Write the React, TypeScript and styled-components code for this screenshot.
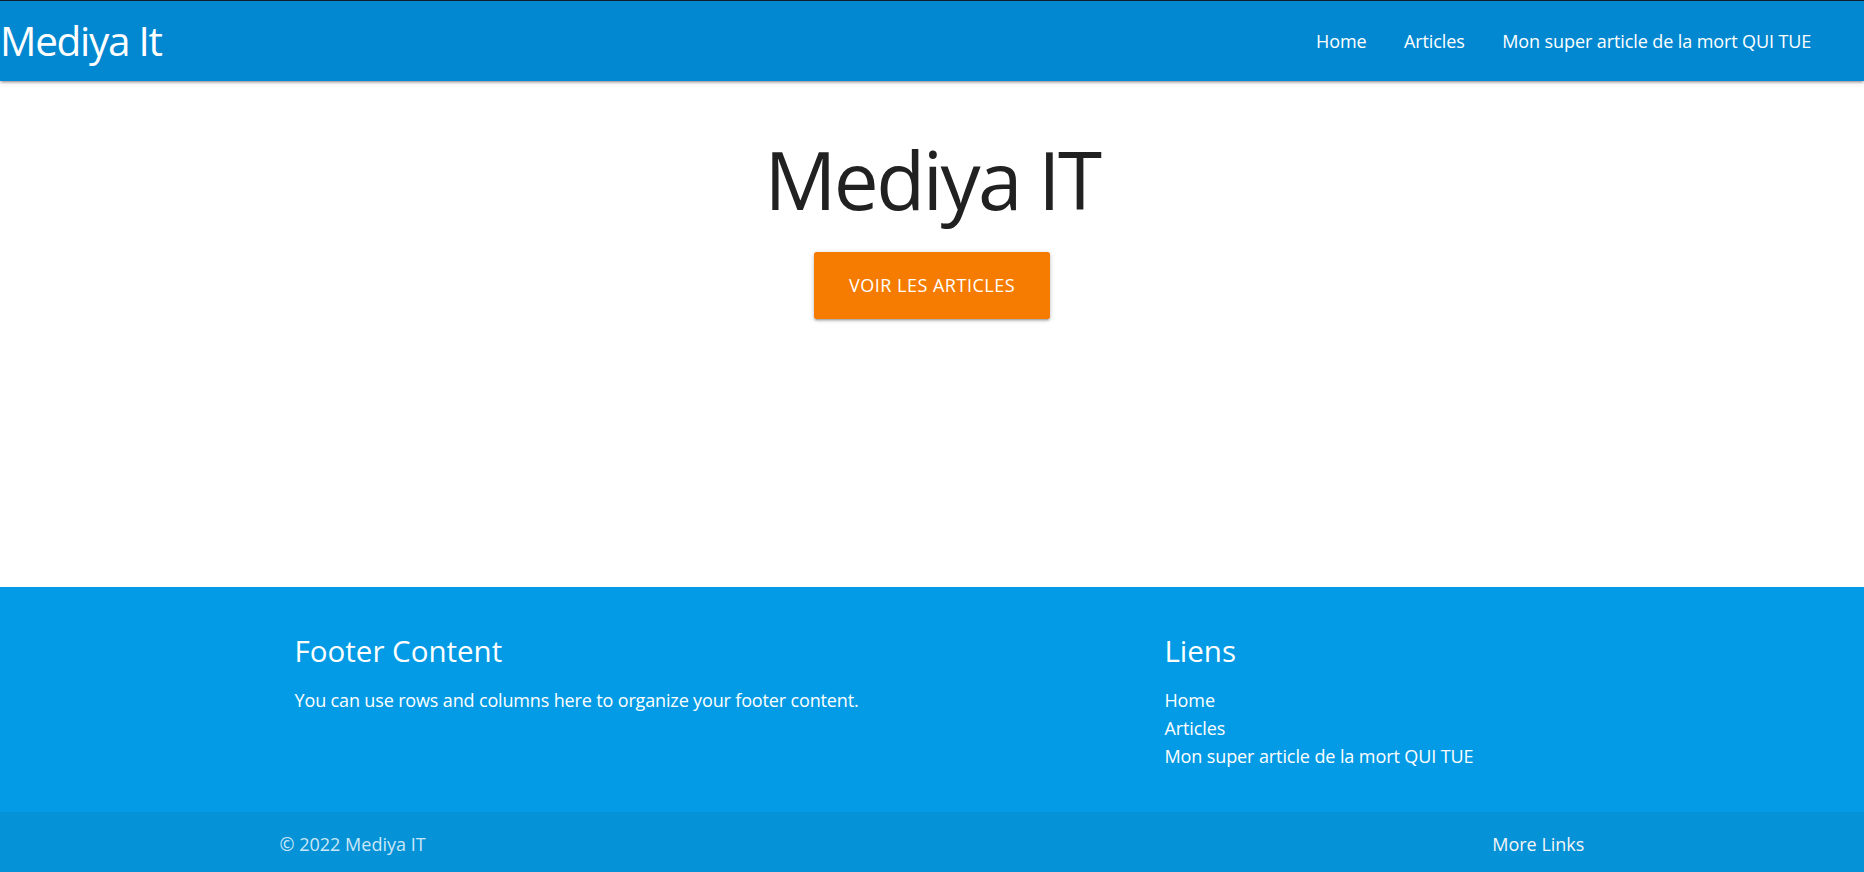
import React from "react";
import styled, { createGlobalStyle } from "styled-components";

const GlobalStyle = createGlobalStyle`
  html, body { margin: 0; padding: 0; }
  body {
    font-family: "Open Sans", "Noto Sans", sans-serif;
    color: rgba(0, 0, 0, 0.87);
    background: #ffffff;
  }
  * { box-sizing: border-box; }
`;

const Page = styled.div`
  display: flex;
  flex-direction: column;
  min-height: 100vh;
`;

const NavBar = styled.nav`
  height: 81px;
  border-top: 1px solid #111d28;
  background: #0288d1;
  color: #ffffff;
  display: flex;
  align-items: center;
  justify-content: space-between;
  box-shadow: 0 2px 2px 0 rgba(0, 0, 0, 0.14), 0 3px 1px -2px rgba(0, 0, 0, 0.12),
    0 1px 5px 0 rgba(0, 0, 0, 0.2);
  position: relative;
  z-index: 2;
`;

const Brand = styled.a`
  font-size: 40.5px;
  letter-spacing: -1.3px;
  line-height: 80px;
  color: #ffffff;
  text-decoration: none;
  padding-left: 0;
`;

const NavList = styled.ul`
  list-style: none;
  display: flex;
  margin: 0;
  padding: 0 34px 0 0;
`;

const NavLink = styled.a`
  display: block;
  padding: 0 18.75px;
  line-height: 80px;
  font-size: 18px;
  letter-spacing: -0.1px;
  color: #ffffff;
  text-decoration: none;
`;

const Main = styled.main`
  flex: 1;
  display: flex;
  flex-direction: column;
  align-items: center;
`;

const Title = styled.h1`
  margin: 52px 0 27px;
  font-size: 80px;
  letter-spacing: -2.5px;
  line-height: 92px;
  font-weight: 400;
  color: #212121;
`;

const ActionButton = styled.a`
  display: inline-block;
  height: 67px;
  line-height: 67px;
  padding: 0 35px;
  font-size: 18px;
  letter-spacing: 0.5px;
  text-transform: uppercase;
  color: #ffffff;
  background: #f57c00;
  border-radius: 2.5px;
  text-decoration: none;
  box-shadow: 0 2px 2px 0 rgba(0, 0, 0, 0.14), 0 3px 1px -2px rgba(0, 0, 0, 0.12),
    0 1px 5px 0 rgba(0, 0, 0, 0.2);
`;

const Footer = styled.footer`
  background: #039be5;
  color: #ffffff;
`;

const FooterBody = styled.div`
  padding: 46px 0 42px;
`;

const Container = styled.div`
  width: 70%;
  margin: 0 auto;
`;

const FooterRow = styled.div`
  display: grid;
  grid-template-columns: 3fr 1fr 2fr;
`;

const FooterCol = styled.div<{ $col: number }>`
  grid-column: ${(p) => p.$col};
  padding: 0 15px;
`;

const FooterHeading = styled.h5`
  margin: 0 0 17px;
  font-size: 29.5px;
  line-height: 36px;
  font-weight: 400;
`;

const FooterText = styled.p`
  margin: 0;
  font-size: 18px;
  letter-spacing: -0.15px;
  line-height: 28px;
`;

const LinkList = styled.ul`
  list-style: none;
  margin: 0;
  padding: 0;
`;

const FooterLink = styled.a`
  display: block;
  font-size: 18px;
  letter-spacing: -0.1px;
  line-height: 28px;
  color: #ffffff;
  text-decoration: none;
`;

const Copyright = styled.div`
  height: 60px;
  background: rgba(51, 51, 51, 0.08);
  color: rgba(255, 255, 255, 0.8);
`;

const CopyrightInner = styled(Container)`
  display: flex;
  justify-content: space-between;
  font-size: 18px;
  padding-top: 4px;
  line-height: 56px;
`;

const MoreLinks = styled.a`
  color: #f5f5f5;
  text-decoration: none;
`;

const links = ["Home", "Articles", "Mon super article de la mort QUI TUE"];

export default function App() {
  return (
    <>
      <GlobalStyle />
      <Page>
        <NavBar>
          <Brand href="#">Mediya It</Brand>
          <NavList>
            {links.map((l) => (
              <li key={l}>
                <NavLink href="#">{l}</NavLink>
              </li>
            ))}
          </NavList>
        </NavBar>
        <Main>
          <Title>Mediya IT</Title>
          <ActionButton href="#">Voir les articles</ActionButton>
        </Main>
        <Footer>
          <FooterBody>
            <Container>
              <FooterRow>
                <FooterCol $col={1}>
                  <FooterHeading>Footer Content</FooterHeading>
                  <FooterText>
                    You can use rows and columns here to organize your footer content.
                  </FooterText>
                </FooterCol>
                <FooterCol $col={3}>
                  <FooterHeading>Liens</FooterHeading>
                  <LinkList>
                    {links.map((l) => (
                      <li key={l}>
                        <FooterLink href="#">{l}</FooterLink>
                      </li>
                    ))}
                  </LinkList>
                </FooterCol>
              </FooterRow>
            </Container>
          </FooterBody>
          <Copyright>
            <CopyrightInner>
              <span>© 2022 Mediya IT</span>
              <MoreLinks href="#">More Links</MoreLinks>
            </CopyrightInner>
          </Copyright>
        </Footer>
      </Page>
    </>
  );
}
